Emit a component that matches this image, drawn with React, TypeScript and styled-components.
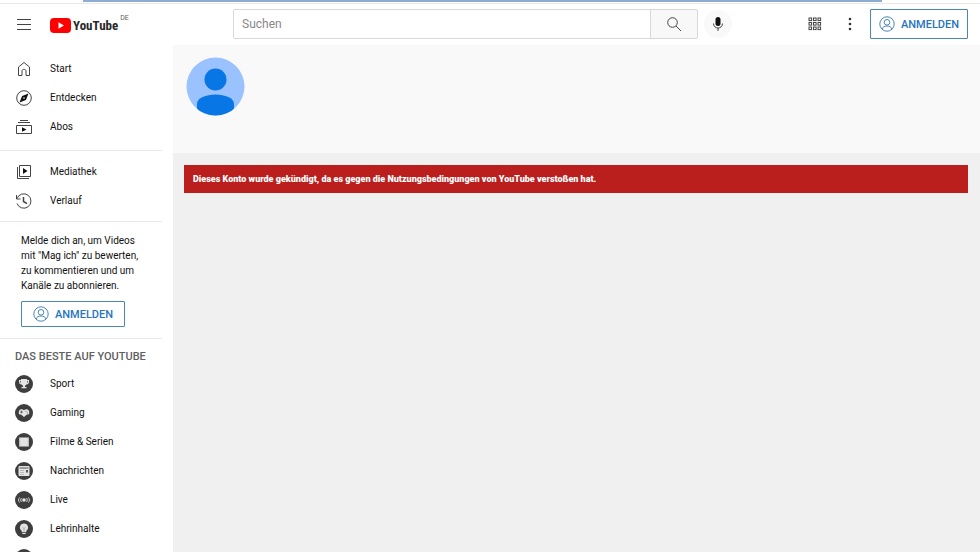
import React from "react";
import styled, { createGlobalStyle } from "styled-components";

const GlobalStyle = createGlobalStyle`
  * { box-sizing: border-box; }
  body { margin: 0; background: #fff; color: #111; font: 10px/15px Roboto, sans-serif; }
  button, input { font: inherit; color: inherit; margin: 0; }
`;

const Page = styled.div`
  height: 100vh;
  overflow: hidden;
  display: flex;
  flex-direction: column;
`;

const ProgressTrack = styled.div`
  flex: none;
  height: 4px;
  padding: 0 10% 0 83px;
  border-bottom: 1px solid #e6e9e6;
`;

const ProgressBar = styled.div`
  height: 2px;
  background: #8facd3;
`;

const Header = styled.header`
  flex: none;
  height: 41px;
  padding-bottom: 1px;
  display: grid;
  grid-template-columns: 233px minmax(0, 499px) 1fr;
  align-items: center;
`;

const HeaderStart = styled.div`
  display: flex;
  align-items: center;
  gap: 16px;
  padding-left: 14px;
`;

const IconButton = styled.button`
  display: grid;
  place-items: center;
  width: 20px;
  height: 28px;
  padding: 0;
  border: 0;
  background: none;
`;

const MicButton = styled(IconButton)`
  width: 28px;
  border-radius: 50%;
  background: #f9f9f9;
`;

const LogoLink = styled.a`
  display: flex;
  align-items: flex-start;
  gap: 2px;
  color: #606060;
  text-decoration: none;
  font-size: 7px;
  line-height: 8px;
`;

const LogoMark = styled.span`
  display: flex;
  align-items: center;
  gap: 2px;
  height: 18px;
  margin-top: 3px;
  color: #282828;
  font: 700 13px/18px "Roboto Condensed", "Liberation Sans Narrow", Roboto, sans-serif;
`;

const SearchForm = styled.form`
  display: flex;
  align-items: center;
  height: 30px;
`;

const SearchInput = styled.input`
  flex: 1;
  min-width: 0;
  height: 30px;
  padding: 0 8px;
  border: 1px solid #d8d8d8;
  border-radius: 2px 0 0 2px;
  background: #fff;
  font-size: 12px;
  outline: 0;
  &::placeholder { color: #888; opacity: 1; }
`;

const SearchButton = styled(IconButton)`
  width: 48px;
  height: 30px;
  margin: 0 6px 0 -1px;
  border: 1px solid #d8d8d8;
  border-radius: 0 2px 2px 0;
  background: #f8f8f8;
`;

const HeaderEnd = styled.div`
  display: flex;
  justify-content: flex-end;
  align-items: center;
  gap: 15px;
  padding-right: 12px;
`;

const SignInButton = styled.button<{ $compact?: boolean }>`
  display: flex;
  align-items: center;
  justify-content: center;
  gap: 6px;
  width: ${(p) => (p.$compact ? "104px" : "98px")};
  height: ${(p) => (p.$compact ? "26px" : "30px")};
  margin-left: ${(p) => (p.$compact ? "0" : "-5px")};
  padding: 0;
  border: 1px solid #4a86b8;
  border-radius: 1px;
  background: #fff;
  color: #2874bd;
  font-size: 11px;
  font-weight: 500;
`;

const Body = styled.div`
  flex: 1;
  min-height: 0;
  display: flex;
`;

const Sidebar = styled.nav`
  flex: none;
  width: 173px;
  padding: 9px 11px 0 0;
  overflow: hidden;
`;

const NavSection = styled.ul<{ $lined?: boolean }>`
  list-style: none;
  margin: 0 0 6px;
  padding: 0 0 ${(p) => (p.$lined ? "9px" : "6px")};
  border-bottom: 1px solid #e8e8e8;
`;

const HistorySection = styled(NavSection)`
  margin-bottom: 11px;
`;

const TopicSection = styled(NavSection)`
  border: 0;
`;

const NavLink = styled.a`
  display: flex;
  align-items: center;
  gap: 17px;
  height: 29px;
  padding-left: 15px;
  color: #111;
  text-decoration: none;
  & svg { flex: none; }
`;

const SignInPrompt = styled.section`
  padding: 0 18px 11px 21px;
  border-bottom: 1px solid #e8e8e8;
`;

const PromptText = styled.p`
  margin: 0 0 8px;
  white-space: nowrap;
`;

const TopicHeading = styled.h2`
  margin: 0;
  padding: 10px 0 4px 15px;
  font: 500 11px/16px Roboto, sans-serif;
  color: #606060;
  white-space: nowrap;
`;

const Main = styled.main`
  flex: 1;
  min-width: 0;
  background: #f0f0f0;
`;

const ChannelHeader = styled.div`
  height: 108px;
  padding: 12px 13px;
  background: #f9f9f9;
`;

const Alert = styled.div`
  margin: 12px 12px 0 11px;
  padding: 7px 9px 6px;
  background: #ba1f1e;
  color: #fff;
  font-size: 9px;
  font-weight: 900;
`;

const Glyph = ({ children, size = 18 }: { children: React.ReactNode; size?: number }) => (
  <svg width={size} height={size} viewBox="0 0 18 18" fill="none" stroke="#444" strokeWidth="1" aria-hidden="true">
    {children}
  </svg>
);

const Topic = ({ children }: { children: React.ReactNode }) => (
  <svg width="18" height="18" viewBox="0 0 18 18" fill="#e4e4e4" aria-hidden="true">
    <circle cx="9" cy="9" r="9" fill="#3e3e3e" />
    {children}
  </svg>
);

const HomeIcon = () => (
  <Glyph><path d="M3.5 15.5V7L9 2.5 14.500 7v8.500h-3.500V11c0-2.200-4-2.200-4 0v4.500z" /></Glyph>
);
const CompassIcon = () => (
  <Glyph>
    <circle cx="9" cy="9" r="7.300" />
    <path d="M13.500 4.500 10.900 10.900 4.500 13.500 7.100 7.100z" fill="#111" stroke="none" />
    <circle cx="9" cy="9" r=".8" fill="#fff" stroke="none" />
  </Glyph>
);
const SubscriptionsIcon = () => (
  <Glyph>
    <path d="M5 2.500h8M3 4.500h12M1.500 7.500h15v8h-15z" />
    <path d="m7 9.300 4.500 2.200L7 13.700z" fill="#111" stroke="none" />
  </Glyph>
);
const LibraryIcon = () => (
  <Glyph>
    <path d="M4.500 2.500h11v11h-11zM2.500 4v11.500H14" />
    <path d="m8 5 4.500 3L8 11z" fill="#111" stroke="none" />
  </Glyph>
);
const HistoryIcon = () => (
  <Glyph>
    <path d="M2 6.500a7.200 7.200 0 1 1 0 5M1.500 3v4h4" />
    <path d="M8.500 5v4.500l3.500 2.200" strokeWidth="1.500" />
  </Glyph>
);
const MenuIcon = () => <Glyph><path d="M2 4.500h14M2 9.500h14M2 14.500h14" /></Glyph>;
const SearchIcon = () => (
  <Glyph>
    <circle cx="7.500" cy="7.500" r="4.800" />
    <path d="m11 11 5 5" />
  </Glyph>
);
const MicIcon = () => (
  <Glyph>
    <rect x="6.500" y="2" width="5" height="9" rx="2.500" fill="#111" stroke="none" />
    <path d="M4.500 8.500c0 6 9 6 9 0M9 13v3" />
  </Glyph>
);
const AppsIcon = () => (
  <Glyph>
    {[3, 7.500, 12].flatMap((y) => [3, 7.500, 12].map((x) => (
      <rect key={`${x}-${y}`} x={x} y={y} width="2.600" height="2.600" />
    )))}
  </Glyph>
);
const MoreIcon = () => (
  <Glyph>
    {[4, 9, 14].map((y) => <circle key={y} cx="9" cy={y} r="1.300" fill="#333" stroke="none" />)}
  </Glyph>
);
const UserIcon = () => (
  <svg width="16" height="16" viewBox="0 0 16 16" fill="none" stroke="#4a86b8" aria-hidden="true">
    <circle cx="8" cy="8" r="7.200" />
    <circle cx="8" cy="6.300" r="2.800" />
    <path d="M3.200 13c.5-4 9.100-4 9.600 0" />
  </svg>
);
const TrophyIcon = () => (
  <Topic>
    <path d="M6 4h6v1h2v2c0 1.500-1 2.400-2.500 2.500L10 10.700V12h1.500v1.300h-5V12H8v-1.300L6.500 9.500C5 9.400 4 8.500 4 7V5h2z" />
    <path d="M5.500 6v1.700M12.500 6v1.700" stroke="#3e3e3e" strokeWidth=".7" />
  </Topic>
);
const GamingIcon = () => (
  <Topic>
    <path d="M4 7c1-2.500 3.500-2 5-.8C10.500 5 13 4.500 14 7c1 3-.5 4-2 3.500L9 13l-3-2.500C4.500 11 3 10 4 7z" />
    <path d="M5 8h3M6.500 6.700v2.600M10.500 7.500h1M12 9h1" stroke="#555" strokeWidth=".8" />
  </Topic>
);
const FilmIcon = () => (
  <Topic>
    <rect x="4" y="4.500" width="10" height="9" />
    <path d="M4.700 4.500v9M13.300 4.500v9" stroke="#888" strokeDasharray="1 1" />
  </Topic>
);
const NewsIcon = () => (
  <Topic>
    <rect x="3.500" y="4" width="11" height="10" rx="1" />
    <path d="M4.500 6h9" stroke="#555" />
    <path d="M5 8.500h4M5 10.500h4M5 12.500h4" stroke="#aaa" strokeWidth=".7" />
    <path d="M11 8h2v2.500h-2z" fill="#555" />
  </Topic>
);
const LiveIcon = () => (
  <Topic>
    <circle cx="9" cy="9" r="1.800" />
    <path d="M6.500 7c-1 1.200-1 2.800 0 4M4.500 6.500c-1.200 1.500-1.200 3.500 0 5M11.500 7c1 1.200 1 2.800 0 4M13.500 6.500c1.200 1.500 1.200 3.500 0 5" fill="none" stroke="#d0d0d0" />
  </Topic>
);
const BulbIcon = () => (
  <Topic>
    <path d="M9 3.500a4 4 0 0 0-2.300 7.300V12h4.600v-1.200A4 4 0 0 0 9 3.500zM7.300 12.700h3.400V14H7.300z" />
    <path d="m7.500 7.500 1.500 1 1.500-1M9 8.500V12" fill="none" stroke="#999" strokeWidth=".7" />
  </Topic>
);
const SphereIcon = () => <Topic><circle cx="9" cy="9" r="4.500" /></Topic>;

const Logo = () => (
  <LogoMark>
    <svg width="21" height="15" viewBox="0 0 21 15" aria-hidden="true">
      <rect width="21" height="15" rx="4" fill="#f00" />
      <path d="m8.500 4.300 5.500 3.200-5.500 3.200z" fill="#fff" />
    </svg>
    YouTube
  </LogoMark>
);

const Avatar = () => (
  <svg width="59" height="59" viewBox="0 0 59 59" role="img" aria-label="Kanalbild">
    <clipPath id="avatar-circle"><circle cx="29.500" cy="29.500" r="29" /></clipPath>
    <g clipPath="url(#avatar-circle)">
      <path d="M0 0h59v59H0z" fill="#99c2ff" />
      <circle cx="29.500" cy="22.500" r="11" fill="#0877e5" />
      <path d="M11 59V47c0-6 9-9.500 18.500-9.500S48 41 48 47v12z" fill="#0877e5" />
    </g>
  </svg>
);

type Item = { label: string; Icon: React.ComponentType };

const mainItems: Item[] = [
  { label: "Start", Icon: HomeIcon },
  { label: "Entdecken", Icon: CompassIcon },
  { label: "Abos", Icon: SubscriptionsIcon },
];
const libraryItems: Item[] = [
  { label: "Mediathek", Icon: LibraryIcon },
  { label: "Verlauf", Icon: HistoryIcon },
];
const topicItems: Item[] = [
  { label: "Sport", Icon: TrophyIcon },
  { label: "Gaming", Icon: GamingIcon },
  { label: "Filme & Serien", Icon: FilmIcon },
  { label: "Nachrichten", Icon: NewsIcon },
  { label: "Live", Icon: LiveIcon },
  { label: "Lehrinhalte", Icon: BulbIcon },
  { label: "Spotlight", Icon: SphereIcon },
];

const NavItems = ({ items }: { items: Item[] }) => (
  <>
    {items.map(({ label, Icon }) => (
      <li key={label}><NavLink href="#"><Icon />{label}</NavLink></li>
    ))}
  </>
);

export default function App() {
  return (
    <Page>
      <GlobalStyle />
      <ProgressTrack><ProgressBar /></ProgressTrack>
      <Header>
        <HeaderStart>
          <IconButton aria-label="Menü"><MenuIcon /></IconButton>
          <LogoLink href="#" aria-label="YouTube DE"><Logo />DE</LogoLink>
        </HeaderStart>
        <SearchForm role="search" onSubmit={(e) => e.preventDefault()}>
          <SearchInput type="text" placeholder="Suchen" aria-label="Suchen" />
          <SearchButton type="submit" aria-label="Suche starten"><SearchIcon /></SearchButton>
          <MicButton type="button" aria-label="Sprachsuche"><MicIcon /></MicButton>
        </SearchForm>
        <HeaderEnd>
          <IconButton aria-label="YouTube-Apps"><AppsIcon /></IconButton>
          <IconButton aria-label="Einstellungen"><MoreIcon /></IconButton>
          <SignInButton><UserIcon />ANMELDEN</SignInButton>
        </HeaderEnd>
      </Header>
      <Body>
        <Sidebar>
          <NavSection $lined><NavItems items={mainItems} /></NavSection>
          <HistorySection><NavItems items={libraryItems} /></HistorySection>
          <SignInPrompt>
            <PromptText>
              Melde dich an, um Videos<br />mit "Mag ich" zu bewerten,<br />
              zu kommentieren und um<br />Kanäle zu abonnieren.
            </PromptText>
            <SignInButton $compact><UserIcon />ANMELDEN</SignInButton>
          </SignInPrompt>
          <TopicHeading>DAS BESTE AUF YOUTUBE</TopicHeading>
          <TopicSection><NavItems items={topicItems} /></TopicSection>
        </Sidebar>
        <Main>
          <ChannelHeader><Avatar /></ChannelHeader>
          <Alert role="alert">
            Dieses Konto wurde gekündigt, da es gegen die Nutzungsbedingungen von YouTube verstoßen hat.
          </Alert>
        </Main>
      </Body>
    </Page>
  );
}
